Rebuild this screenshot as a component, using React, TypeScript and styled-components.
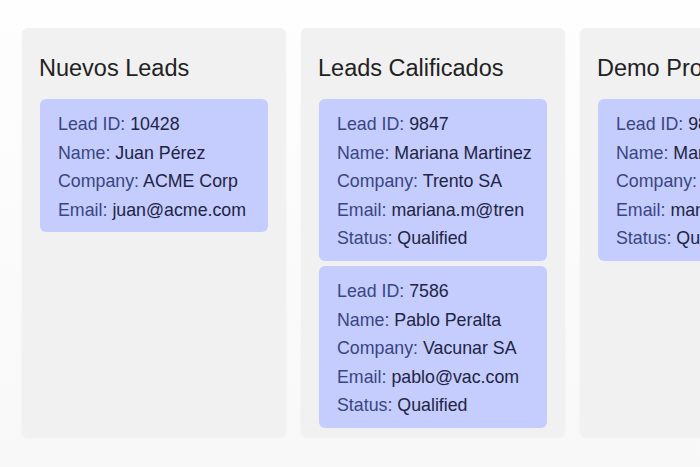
import { FC } from "react";
import styled, { createGlobalStyle } from "styled-components";

type Lead = {
  id: number;
  name: string;
  company: string;
  email: string;
  status?: string;
};

type Stage = {
  title: string;
  leads: Lead[];
};

const stages: Stage[] = [
  {
    title: "Nuevos Leads",
    leads: [{ id: 10428, name: "Juan Pérez", company: "ACME Corp", email: "juan@acme.com" }],
  },
  {
    title: "Leads Calificados",
    leads: [
      {
        id: 9847,
        name: "Mariana Martinez",
        company: "Trento SA",
        email: "mariana.m@tren",
        status: "Qualified",
      },
      {
        id: 7586,
        name: "Pablo Peralta",
        company: "Vacunar SA",
        email: "pablo@vac.com",
        status: "Qualified",
      },
    ],
  },
  {
    title: "Demo Programada",
    leads: [
      {
        id: 9847,
        name: "Mariana Martinez",
        company: "Trento SA",
        email: "mariana.m@tren",
        status: "Qualified",
      },
    ],
  },
];

const GlobalStyle = createGlobalStyle`
  html, body {
    margin: 0;
    padding: 0;
  }

  body {
    font-family: "Liberation Sans", Arial, sans-serif;
    background: linear-gradient(#fefefe, #f8f8f8);
    min-height: 467px;
  }
`;

const Row: FC<{ label: string; value: string | number }> = ({ label, value }) => (
  <Line>
    <Label>{label}:</Label> {value}
  </Line>
);

export default function App() {
  return (
    <>
      <GlobalStyle />
      <Board>
        {stages.map((stage) => (
          <Column key={stage.title}>
            <Title>{stage.title}</Title>
            <Cards>
              {stage.leads.map((lead) => (
                <Card key={`${stage.title}-${lead.id}`}>
                  <Row label="Lead ID" value={lead.id} />
                  <Row label="Name" value={lead.name} />
                  <Row label="Company" value={lead.company} />
                  <Row label="Email" value={lead.email} />
                  {lead.status && <Row label="Status" value={lead.status} />}
                </Card>
              ))}
            </Cards>
          </Column>
        ))}
      </Board>
    </>
  );
}

const Board = styled.div`
  display: flex;
  gap: 15px;
  padding: 28px 0 0 22px;
  width: 700px;
  height: 467px;
  box-sizing: border-box;
  overflow: hidden;
`;

const Column = styled.section`
  flex: 0 0 264px;
  min-width: 0;
  height: 409px;
  box-sizing: border-box;
  padding: 26px 18px 0 18px;
  background: #f1f1f1;
  border-radius: 6px;
  box-shadow: 0 1px 3px rgba(0, 0, 0, 0.04);
  overflow: hidden;
`;

const Title = styled.h2`
  margin: 0 0 17px -1px;
  font-size: 23.5px;
  line-height: 28px;
  font-weight: 400;
  color: #222;
  white-space: nowrap;
`;

const Cards = styled.div`
  display: flex;
  flex-direction: column;
  gap: 5px;
`;

const Card = styled.div`
  background: #c4cdfd;
  border-radius: 6px;
  padding: 11px 12px 8px 18px;
  overflow: hidden;
`;

const Line = styled.div`
  font-size: 17.8px;
  line-height: 28.6px;
  color: #1f2444;
  white-space: nowrap;
`;

const Label = styled.span`
  color: #3a4585;
`;
